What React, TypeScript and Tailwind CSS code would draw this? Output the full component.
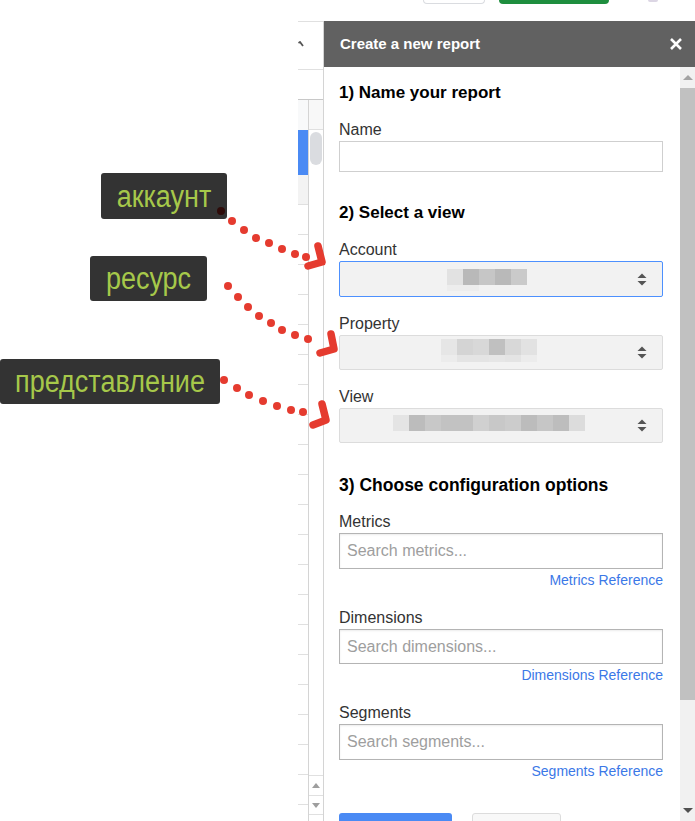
import React from 'react';

const font = "font-['Liberation_Sans',Arial,sans-serif]";

// blurred pixel blocks inside the selects (16px squares)
interface Mosaic {
  left: number;
  top: number;
  row1: string[];
  row2: string[];
  row2Height: number;
}

const accountMosaic: Mosaic = {
  left: 107,
  top: 7,
  row1: ['#e2e2e2', '#b9b9b9', '#c6c6c6', '#b9b9b9', '#cacaca'],
  row2: ['#ededed', '#ededed'],
  row2Height: 6,
};

const propertyMosaic: Mosaic = {
  left: 101,
  top: 3,
  row1: ['#e6e6e6', '#d4d4d4', '#d8d8d8', '#c0c0c0', '#d8d8d8', '#e2e2e2'],
  row2: ['#ececec', '#e4e4e4', '#e4e4e4', '#e6e6e6', '#e4e4e4', '#ececec'],
  row2Height: 7,
};

const viewMosaic: Mosaic = {
  left: 53,
  top: 6,
  row1: [
    '#e4e4e4', '#bcbcbc', '#c8c8c8', '#c2c2c2', '#c2c2c2', '#d0d0d0',
    '#c8c8c8', '#cccccc', '#bcbcbc', '#c6c6c6', '#bdbdbd', '#dcdcdc',
  ],
  row2: [],
  row2Height: 0,
};

function SortArrows() {
  return (
    <svg width="10" height="13" viewBox="0 0 10 13" className="shrink-0">
      <path d="M0.5 5 L5 0.5 L9.5 5 Z" fill="#555" />
      <path d="M0.5 8 L5 12.5 L9.5 8 Z" fill="#555" />
    </svg>
  );
}

function FakeSelect({ mosaic, focused, height }: { mosaic: Mosaic; focused?: boolean; height: string }) {
  return (
    <div
      className={`relative mt-[2px] ${height} rounded-[2px] bg-[#f2f2f2] border ${
        focused ? 'border-[#4d90fe]' : 'border-[#dcdcdc]'
      } flex items-center`}
    >
      <div className="flex-1 self-start flex flex-col" style={{ paddingLeft: mosaic.left, paddingTop: mosaic.top }}>
        <div className="flex">
          {mosaic.row1.map((c, i) => (
            <div key={i} className="w-[16px] h-[16px]" style={{ backgroundColor: c }} />
          ))}
        </div>
        {mosaic.row2.length > 0 && (
          <div className="flex">
            {mosaic.row2.map((c, i) => (
              <div key={i} className="w-[16px]" style={{ backgroundColor: c, height: mosaic.row2Height }} />
            ))}
          </div>
        )}
      </div>
      <div className="pr-[15px]">
        <SortArrows />
      </div>
    </div>
  );
}

function SearchField({ placeholder, height }: { placeholder: string; height: string }) {
  return (
    <div
      className={`mt-[2px] ${height} border border-[#b4b4b4] shadow-[inset_0_1px_2px_rgba(0,0,0,0.08)] flex items-center pl-[7px] text-[16px] text-[#9e9e9e]`}
    >
      {placeholder}
    </div>
  );
}

function Label({ children, mt }: { children: React.ReactNode; mt: string }) {
  return <div className={`${mt} text-[16px] leading-[18px] text-[#333]`}>{children}</div>;
}

function RefLink({ children }: { children: React.ReactNode }) {
  return <div className="mt-[3px] text-right text-[14px] leading-[16px] text-[#3b78e7]">{children}</div>;
}

function Sliver() {
  const rows = Array.from({ length: 20 });
  return (
    <div className="w-[26px] border-r border-[#d4d4d4] flex flex-col">
      <div className="h-[49px] shrink-0 border-t border-b border-[#e0e0e0] flex items-center">
        <svg width="8" height="8" viewBox="0 0 8 8" className="-mt-[2px]">
          <path d="M0.5 2 L2 1 L5 5" stroke="#555" strokeWidth="1.8" fill="none" />
        </svg>
      </div>
      <div className="h-[30px] shrink-0 border-b border-[#c8c8c8]" />
      <div className="flex-1 flex min-h-0">
        <div className="w-[10px] flex flex-col overflow-hidden">
          <div className="h-[30px] shrink-0 bg-[#f8f9fa]" />
          <div className="h-[45px] shrink-0 bg-[#4a8af4]" />
          <div className="h-[30px] shrink-0 bg-[#f3f3f3] border-b border-[#e0e0e0]" />
          {rows.map((_, i) => (
            <div key={i} className="h-[30px] shrink-0 border-b border-[#e0e0e0]" />
          ))}
        </div>
        <div className="w-[15px] border-l border-[#d4d4d4] flex flex-col">
          <div className="h-[30px] shrink-0 bg-[#f8f8f8] border-b border-[#e0e0e0]" />
          <div className="mt-[2px] mx-auto w-[12px] h-[33px] shrink-0 rounded-[6px] bg-[#dadce0]" />
          <div className="flex-1" />
          <div className="h-[20px] shrink-0 border-t border-[#e0e0e0] flex items-center justify-center">
            <svg width="8" height="5" viewBox="0 0 8 5">
              <path d="M0 5 L4 0 L8 5 Z" fill="#9e9e9e" />
            </svg>
          </div>
          <div className="h-[20px] shrink-0 border-t border-b border-[#e0e0e0] flex items-center justify-center">
            <svg width="8" height="5" viewBox="0 0 8 5">
              <path d="M0 0 L4 5 L8 0 Z" fill="#9e9e9e" />
            </svg>
          </div>
          <div className="h-[6px] shrink-0" />
        </div>
      </div>
    </div>
  );
}

const arrowDots: [number, number][][] = [
  [[232, 221], [244, 230], [256, 238], [269, 243], [282, 249], [295, 254], [306, 257]],
  [[228, 286], [238, 297], [248, 307], [259, 316], [271, 323], [282, 330], [295, 335], [308, 339]],
  [[224, 380], [237, 388], [249, 395], [263, 401], [277, 406], [291, 410], [303, 412]],
];

const arrowHeads = ['M318 246 L322 262 L308 266', 'M331 334 L334 349 L320 353', 'M322 404 L326 420 L313 425'];

function Callouts() {
  return (
    <>
      <div className="absolute left-[101px] top-[173px] w-[126px] h-[46px] rounded-[3px] bg-[#333] flex items-center justify-center text-[27px] text-[#a6c84a]">
        <span className="inline-block scale-y-[1.18]">аккаунт</span>
      </div>
      <div className="absolute left-[90px] top-[256px] w-[117px] h-[45px] rounded-[3px] bg-[#333] flex items-center justify-center text-[27px] text-[#a6c84a]">
        <span className="inline-block scale-y-[1.18]">ресурс</span>
      </div>
      <div className="absolute left-0 top-[359px] w-[220px] h-[45px] rounded-[3px] bg-[#333] flex items-center justify-center text-[27px] text-[#a6c84a]">
        <span className="inline-block scale-y-[1.18]">представление</span>
      </div>
      <svg className="absolute left-0 top-0 pointer-events-none" width="695" height="821" viewBox="0 0 695 821">
        <circle cx="221" cy="211" r="4" fill="#2e0b09" />
        {arrowDots.map((dots, i) =>
          dots.map(([x, y], j) => <circle key={`${i}-${j}`} cx={x} cy={y} r="4" fill="#e53b2f" />)
        )}
        {arrowHeads.map((d, i) => (
          <path
            key={i}
            d={d}
            stroke="#e53b2f"
            strokeWidth="7.5"
            fill="none"
            strokeLinecap="round"
            strokeLinejoin="round"
          />
        ))}
      </svg>
    </>
  );
}

export default function App() {
  return (
    <div className={`relative w-[695px] h-[821px] overflow-hidden bg-white flex flex-col ${font}`}>
      {/* top toolbar remains */}
      <div className="h-[21px] shrink-0 flex items-start">
        <div className="ml-[423px] w-[62px] h-[4px] border border-t-0 border-[#dadce0] rounded-b-[12px]" />
        <div className="ml-[14px] w-[110px] h-[4px] bg-[#1e8e3e] rounded-b-[4px]" />
        <div className="ml-[39px] w-[10px] h-[2px] bg-[#dcd6e4] rounded-b-[4px]" />
      </div>

      <div className="flex-1 flex min-h-0">
        <div className="w-[298px] shrink-0" />
        <Sliver />

        {/* sidebar panel */}
        <div className="w-[371px] shrink-0 flex flex-col">
          <div className="h-[46px] shrink-0 bg-[#616161] flex items-center justify-between pl-[16px] pr-[13px]">
            <span className="text-[15px] font-bold text-white">Create a new report</span>
            <svg width="12" height="12" viewBox="0 0 12 12">
              <path d="M1 1 L11 11 M11 1 L1 11" stroke="#fff" strokeWidth="2.6" />
            </svg>
          </div>

          <div className="flex-1 flex min-h-0">
            <div className="flex-1 pl-[15px] pr-[17px] pt-[16px] overflow-hidden">
              <div className="text-[17px] leading-[20px] font-bold text-black">1) Name your report</div>
              <Label mt="mt-[18px]">Name</Label>
              <div className="mt-[2px] h-[31px] border border-[#cfcfcf]" />

              <div className="mt-[31px] text-[17px] leading-[20px] font-bold text-black">2) Select a view</div>
              <Label mt="mt-[18px]">Account</Label>
              <FakeSelect mosaic={accountMosaic} focused height="h-[36px]" />
              <Label mt="mt-[18px]">Property</Label>
              <FakeSelect mosaic={propertyMosaic} height="h-[35px]" />
              <Label mt="mt-[18px]">View</Label>
              <FakeSelect mosaic={viewMosaic} height="h-[35px]" />

              <div className="mt-[32px] text-[17.5px] leading-[20px] font-bold text-black">
                3) Choose configuration options
              </div>
              <Label mt="mt-[18px]">Metrics</Label>
              <SearchField placeholder="Search metrics..." height="h-[36px]" />
              <RefLink>Metrics Reference</RefLink>
              <Label mt="mt-[21px]">Dimensions</Label>
              <SearchField placeholder="Search dimensions..." height="h-[35px]" />
              <RefLink>Dimensions Reference</RefLink>
              <Label mt="mt-[21px]">Segments</Label>
              <SearchField placeholder="Search segments..." height="h-[36px]" />
              <RefLink>Segments Reference</RefLink>

              <div className="mt-[34px] flex gap-[20px]">
                <div className="w-[113px] h-[36px] shrink-0 rounded-[3px] bg-[#4a8af4]" />
                <div className="w-[89px] h-[36px] shrink-0 rounded-[3px] bg-[#f8f8f8] border border-[#dcdcdc]" />
              </div>
            </div>

            {/* panel scrollbar */}
            <div className="w-[15px] shrink-0 bg-[#f1f1f1] flex flex-col">
              <div className="h-[21px] shrink-0 flex items-center justify-center">
                <svg width="10" height="5" viewBox="0 0 10 5">
                  <path d="M0 5 L5 0 L10 5 Z" fill="#a3a3a3" />
                </svg>
              </div>
              <div className="h-[612px] shrink-0 bg-[#c1c1c1]" />
              <div className="flex-1" />
              <div className="h-[14px] shrink-0 flex items-start justify-center pt-[1px]">
                <svg width="10" height="5" viewBox="0 0 10 5">
                  <path d="M0 0 L5 5 L10 0 Z" fill="#505050" />
                </svg>
              </div>
            </div>
          </div>
        </div>
      </div>

      <Callouts />
    </div>
  );
}
